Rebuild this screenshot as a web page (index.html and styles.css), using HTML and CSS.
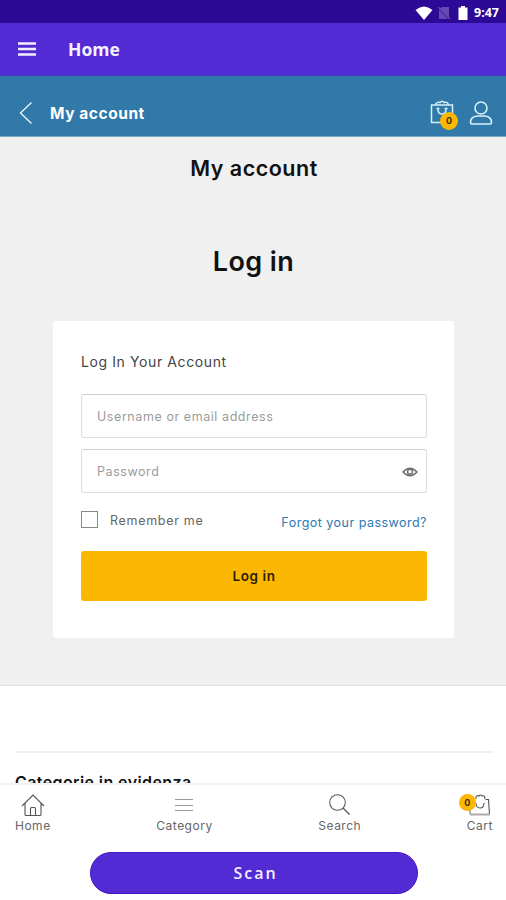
FILE: index.html
```html
<!DOCTYPE html>
<html lang="en">
<head>
<meta charset="utf-8">
<title>My account</title>
<link rel="stylesheet" href="styles.css">
</head>
<body>
<div class="app">
  <div class="status">
    <svg class="wifi" width="18" height="14" viewBox="0 0 18 14"><path d="M9 14 0.500 4Q9-3 17.500 4Z" fill="#fff"/></svg>
    <svg class="sim" width="12" height="14" viewBox="0 0 12 14"><path d="M4 1h7v12L1 3M1 4v9h9" fill="#6848b3"/><path d="M0 1l12 12" stroke="#6848b3" stroke-width="1.200"/></svg>
    <svg class="battery" width="10" height="14" viewBox="0 0 10 14"><path d="M3 0h4v1.500h2.500V14h-9V1.500H3z" fill="#fff"/></svg>
    <span class="time">9:47</span>
  </div>
  <header class="appbar">
    <svg width="18" height="14" viewBox="0 0 18 14"><path d="M0 1.500h18M0 7h18M0 12.500h18" stroke="#f3eeff" stroke-width="2.600"/></svg>
    <span class="appbar-title">Home</span>
  </header>
  <div class="subbar">
    <svg class="back" width="14" height="24" viewBox="0 0 14 24"><path d="M12.500 1.500 1.500 12l11 10.500" fill="none" stroke="#e3f3fb" stroke-width="1.400"/></svg>
    <span class="subbar-title">My account</span>
    <span class="bag">
      <svg width="24" height="26" viewBox="0 0 24 26" fill="none" stroke="#d5f1fa" stroke-width="1.500"><path d="M1.500 5h21v17.500h-21z"/><path d="M6 5V3.500q2-2 4-1 2-2.500 4 0 3-1 4 1V5M8 9q0 5 4 5t4-5M6.500 8.500h3M14.500 8.500h3"/></svg>
      <b class="badge">0</b>
    </span>
    <svg class="user" width="24" height="26" viewBox="0 0 24 26" fill="none" stroke="#d5f1fa" stroke-width="1.600"><circle cx="12" cy="8" r="6"/><path d="M1.500 22.500q0-6 7-6.500h7q7 .5 7 6.500 0 1.500-1.500 1.500H3q-1.500 0-1.500-1.500z"/></svg>
  </div>
  <main class="page">
    <h1 class="title">My account</h1>
    <h2 class="heading">Log in</h2>
    <form class="card">
      <div class="card-title">Log In Your Account</div>
      <div class="field"><span>Username or email address</span></div>
      <div class="field"><span>Password</span>
        <svg width="16" height="10" viewBox="0 0 16 10" fill="none" stroke="#707070" stroke-width="1.500"><path d="M1 5q7-7.500 14 0-7 7.500-14 0z"/><circle cx="8" cy="4.800" r="2.500"/></svg>
      </div>
      <div class="options">
        <span class="check"></span><span class="remember">Remember me</span>
        <a class="forgot">Forgot your password?</a>
      </div>
      <div class="submit"><span>Log in</span></div>
    </form>
  </main>
  <section class="featured"><h3>Categorie in evidenza</h3></section>
  <footer class="dock">
    <nav class="tabs">
      <div class="tab"><svg width="24" height="24" viewBox="0 0 24 24" fill="none" stroke="#555" stroke-width="1.100"><path d="M1 13 12 2l11 11M4 10.500V21.500q0 1 1 1h14q1 0 1-1V10.500M9.500 22.500V15.500q0-1 1-1h3q1 0 1 1v7"/></svg><span>Home</span></div>
      <div class="tab"><svg width="24" height="24" viewBox="0 0 24 24"><path d="M3 6.500h18M3 12.500h18M3 17.500h18" stroke="#999" stroke-width="1"/></svg><span>Category</span></div>
      <div class="tab"><svg width="24" height="24" viewBox="0 0 24 24" fill="none" stroke="#5c5c5c" stroke-width="1.100"><circle cx="9.500" cy="9.500" r="7.800"/><path d="m15 15 6.500 6.500" stroke-width="1.400"/></svg><span>Search</span></div>
      <div class="tab"><span class="cart"><svg width="24" height="24" viewBox="0 0 24 24" fill="none" stroke="#555" stroke-width="1.100"><path d="M17.500 6.500h3l1 15"/><path d="M2 21.500h20M2 17v4" stroke="#aaa" stroke-width="1.800"/><path d="M8 6V4q1-2 3-1 2-2 3 0 3-1 3 3M8 10q0 5 4 5t4-5"/></svg><b class="badge badge-cart">0</b></span><span>Cart</span></div>
    </nav>
    <div class="scan"><span>Scan</span></div>
  </footer>
</div>
</body>
</html>
```

FILE: styles.css
```css
* { box-sizing: border-box; }
body { margin: 0; font-family: Inter, "Liberation Sans", sans-serif; background: #fff; }
svg { display: block; flex: none; }
span, a { white-space: nowrap; }
h1, h2, h3 { margin: 0; white-space: nowrap; }
.app { width: 506px; height: 900px; overflow: hidden; display: flex; flex-direction: column; }
.status { height: 23px; flex: none; background: #2d0a96; display: flex; align-items: center; justify-content: flex-end; padding: 2px 7px 0 0; }
.sim { margin-left: 5px; }
.battery { margin-left: 8px; }
.time { margin-left: 6px; font: 700 12.500px "Noto Sans", sans-serif; color: #fff; line-height: 16px; }
.appbar { height: 53px; flex: none; background: #522bd4; display: flex; align-items: center; padding-left: 18px; border-bottom: 1px solid #4934c6; }
.appbar-title { margin-left: 32px; color: #f5f0ff; font: 700 17.500px "Open Sans", sans-serif; }
.subbar { height: 61px; flex: none; background: #3179a8; display: flex; align-items: center; padding: 14px 13px 0 19px; border-bottom: 1px solid #79a7c2; }
.subbar-title { margin-left: 17px; color: #fff; font-size: 15.500px; font-weight: 700; letter-spacing: .55px; }
.bag { position: relative; margin-left: auto; margin-right: 15px; }
.badge { position: absolute; left: 10px; top: 12px; width: 18px; height: 18px; border-radius: 50%; background: #fdb702; color: #3c2b00; font-size: 9px; line-height: 18px; text-align: center; }
.page { height: 549px; flex: none; background: #f0f0f0; border-bottom: 1px solid #dedede; display: flex; flex-direction: column; align-items: center; padding-top: 16px; }
.title { font-size: 21.500px; line-height: 30px; font-weight: 600; color: #111; letter-spacing: .5px; margin-left: 2px; }
.heading { font-size: 27px; line-height: 36px; font-weight: 600; color: #111; margin-top: 61px; letter-spacing: .4px; margin-left: 1px; }
.card { width: 401px; height: 317px; margin: 41px 0 0 1px; background: #fff; border-radius: 3px; padding: 29px 27px 0 28px; }
.card-title { font-size: 14px; line-height: 24px; color: #444; margin-bottom: 20px; letter-spacing: .6px; }
.field { height: 44px; margin-bottom: 11px; border: 1px solid #dedede; border-top-color: #cfcfcf; border-radius: 3px; display: flex; align-items: center; justify-content: space-between; padding: 1px 8px 0 15px; font-size: 12.500px; letter-spacing: .57px; color: #9b9b9b; }
.options { display: flex; align-items: center; height: 32px; }
.check { width: 17px; height: 17px; border: 1px solid #888; margin-bottom: 2px; }
.remember { margin-left: 12px; font-size: 12.500px; letter-spacing: .7px; color: #666; }
.forgot { margin-left: auto; padding-top: 4px; font-size: 12.500px; letter-spacing: .48px; color: #2a79b0; }
.submit { height: 50px; margin-top: 15px; background: #fbb701; border-radius: 3px; display: flex; align-items: center; justify-content: center; font-size: 13.500px; letter-spacing: .6px; font-weight: 600; color: #2a2100; }
.featured { margin: 65px 13px 0 15px; height: 33px; flex: none; border-top: 2px solid #f1f1f1; overflow: hidden; padding-top: 17px; }
.featured h3 { font-size: 16px; line-height: 24px; font-weight: 600; color: #111; letter-spacing: .4px; }
.dock { height: 117px; flex: none; margin-top: -1px; border-top: 2px solid #f2f2f2; background: #fff; position: relative; }
.tabs { display: flex; justify-content: space-between; padding: 8px 13px 0 15px; height: 67px; }
.tab { display: flex; flex-direction: column; align-items: center; font-size: 12px; letter-spacing: .5px; line-height: 17px; color: #666; }
.cart { position: relative; }
.badge-cart { left: -9px; top: 1px; width: 17px; height: 17px; line-height: 17px; letter-spacing: 0; }
.scan { width: 328px; height: 42px; margin-left: 90px; border-radius: 21px; background: #522bd4; border: 1px solid #4515c4; display: flex; align-items: center; justify-content: center; color: #f4f0ff; font: 600 16px "Open Sans", sans-serif; letter-spacing: 2px; padding-left: 3px; }
```
